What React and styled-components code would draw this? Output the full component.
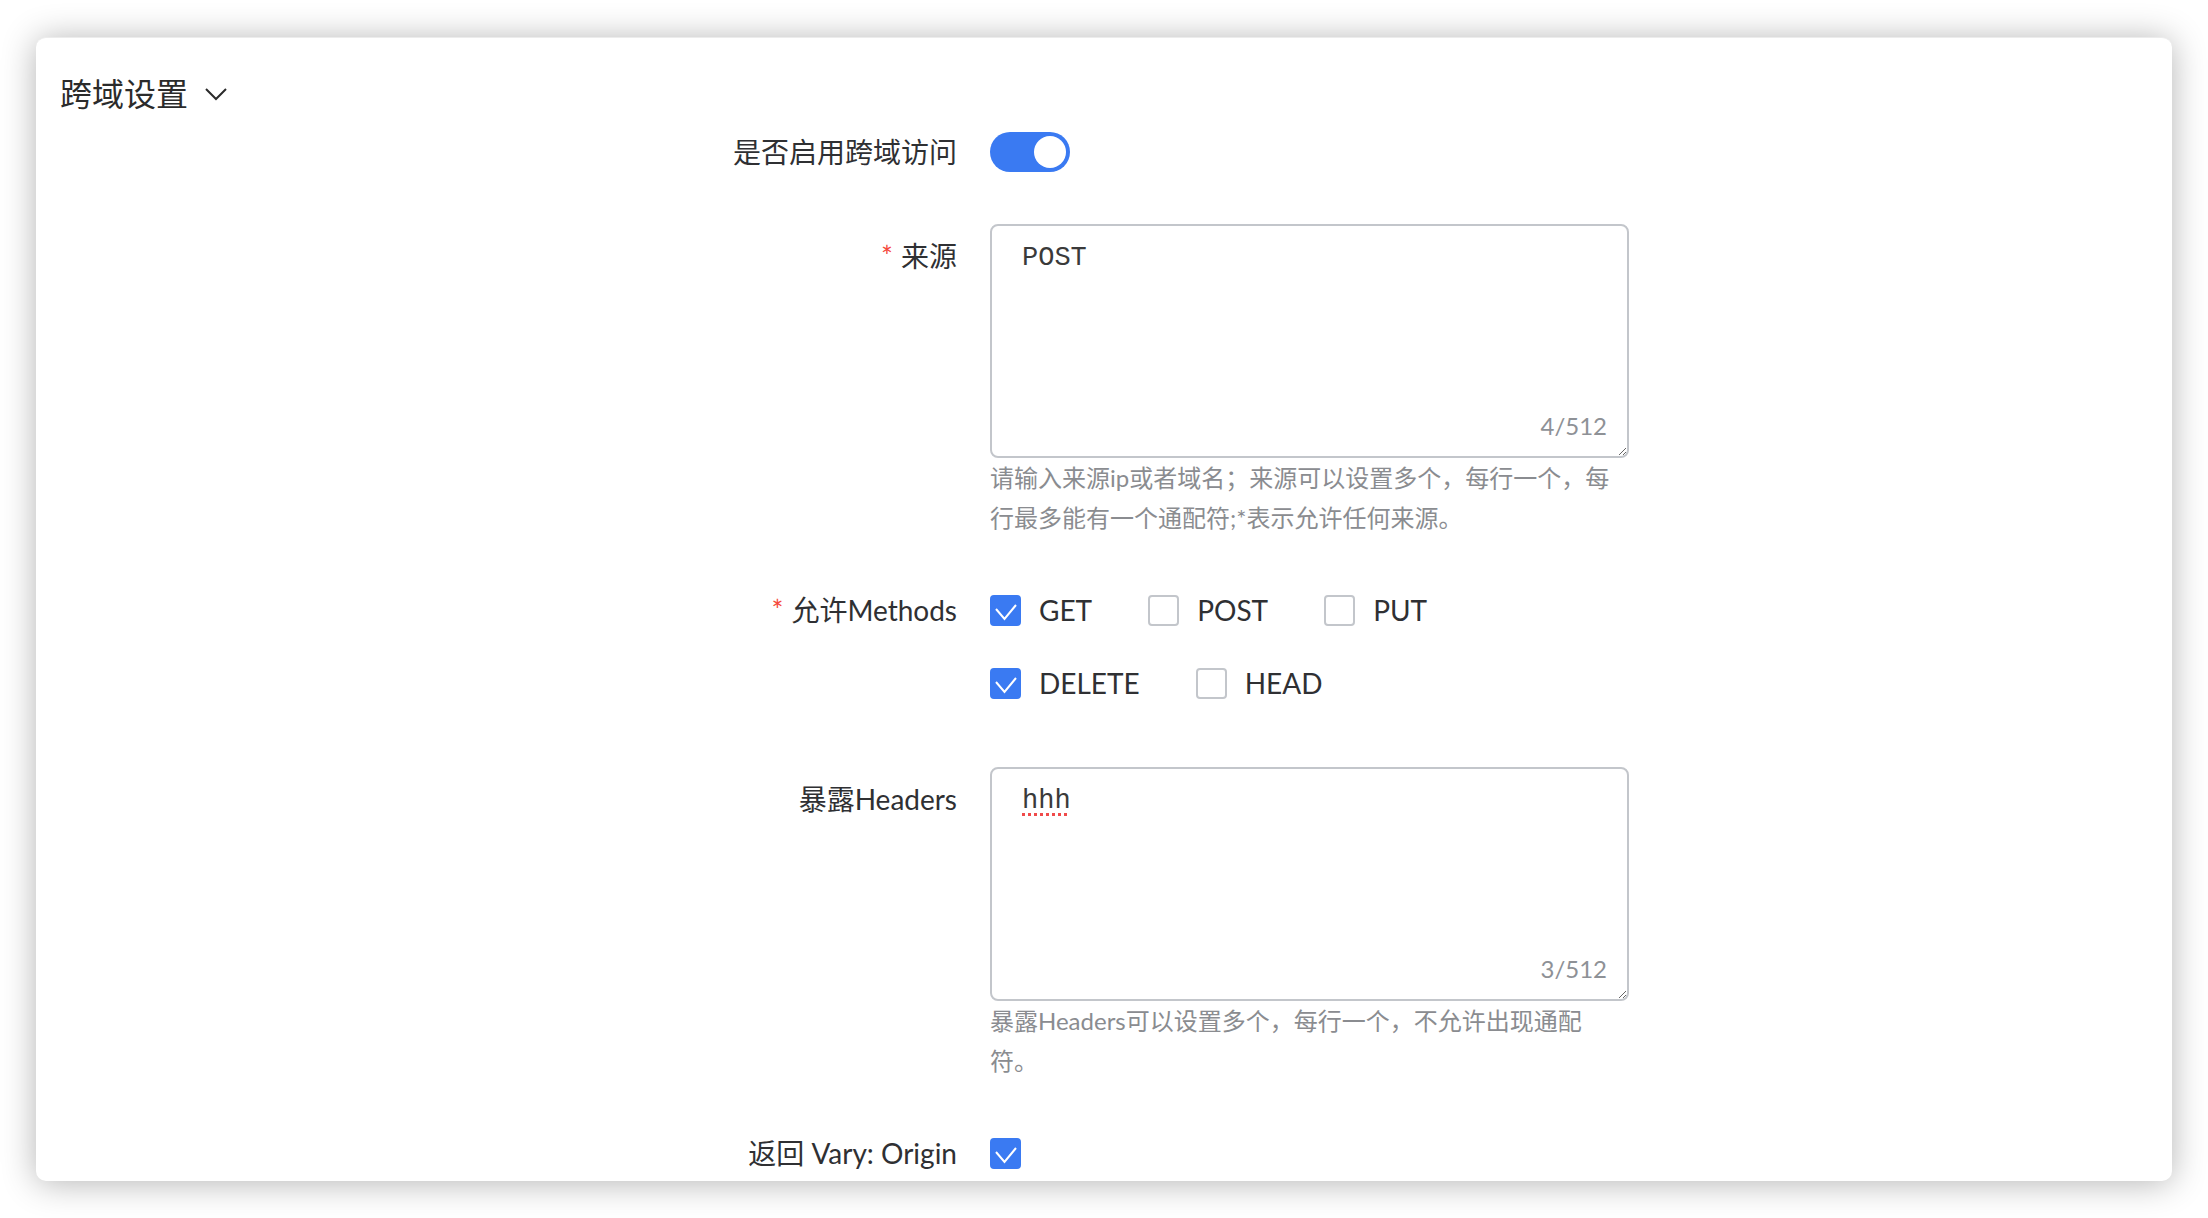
import React from "react";
import styled, { createGlobalStyle } from "styled-components";

const GlobalStyle = createGlobalStyle`
  html, body {
    margin: 0;
    padding: 0;
    background: #fff;
  }
  body {
    font-family: "Lato", "Noto Sans CJK SC", sans-serif;
    color: #2f3033;
  }
  * {
    box-sizing: border-box;
  }
`;

const Page = styled.div`
  width: 2208px;
  height: 1218px;
  padding: 37px 36px 0;
  overflow: hidden;
`;

const Card = styled.div`
  height: 1144px;
  background: #fff;
  border-radius: 10px;
  border-top: 1px solid #ececec;
  box-shadow: 0 2px 34px rgba(0, 0, 0, 0.3);
  padding: 36px 24px 0;
  overflow: hidden;
`;

const Title = styled.div`
  display: flex;
  align-items: center;
  gap: 16px;
  font-size: 32px;
  line-height: 40px;
  color: #2b2b2b;
`;

const Form = styled.div`
  margin-top: 6px;
  padding-left: 597px;
`;

const FormItem = styled.div`
  display: flex;
  align-items: flex-start;
  margin-bottom: ${(p) => p.$gap || 40}px;
`;

const Label = styled.div`
  width: 333px;
  padding-right: 33px;
  text-align: right;
  font-size: 28px;
  line-height: 64px;
  color: #2f3033;
  white-space: nowrap;
`;

const Star = styled.span`
  color: #f5483b;
  margin-right: 8px;
`;

const Control = styled.div`
  width: 639px;
  min-height: 64px;
  display: flex;
  flex-direction: column;
  justify-content: ${(p) => (p.$center ? "center" : "flex-start")};
`;

const Switch = styled.div`
  position: relative;
  width: 80px;
  height: 40px;
  border-radius: 20px;
  background: #3a7af2;

  &::after {
    content: "";
    position: absolute;
    top: 4px;
    right: 4px;
    width: 32px;
    height: 32px;
    border-radius: 50%;
    background: #fff;
  }
`;

const TextBox = styled.div`
  position: relative;
  width: 639px;
  height: 234px;
  border: 2px solid #c3c6cb;
  border-radius: 8px;
  padding: 12px 30px;
  font-family: "Liberation Mono", monospace;
  font-size: 27px;
  line-height: 40px;
  color: #3a3a3a;
  resize: vertical;
  overflow: auto;
`;

const Misspelled = styled.span`
  text-decoration: underline dotted #f04a4a;
  text-decoration-thickness: 3px;
  text-underline-offset: 5px;
`;

const Counter = styled.span`
  position: absolute;
  right: 20px;
  bottom: 18px;
  font-family: "Lato", "Noto Sans CJK SC", sans-serif;
  font-size: 24px;
  line-height: 24px;
  color: #8e9196;
`;

const Hint = styled.div`
  width: 634px;
  font-size: 24px;
  line-height: 40px;
  color: #8a8c90;
`;

const CheckGroup = styled.div`
  display: flex;
  flex-wrap: wrap;
  row-gap: 9px;
`;

const CheckItem = styled.label`
  display: flex;
  align-items: center;
  gap: 18px;
  height: 64px;
  margin-right: 56px;
  font-size: 28px;
  color: #2f3033;
`;

const Box = styled.span`
  width: 31px;
  height: 31px;
  border-radius: 4px;
  border: 2px solid ${(p) => (p.$checked ? "#3a7af2" : "#c3c6cb")};
  background: ${(p) => (p.$checked ? "#3a7af2" : "#fff")};
  display: flex;
  align-items: center;
  justify-content: center;
`;

const Chevron = () => (
  <svg width="24" height="14" viewBox="0 0 24 14">
    <polyline points="2,2 12,12 22,2" fill="none" stroke="#2b2b2b" strokeWidth="2" />
  </svg>
);

const Checkbox = ({ checked }) => (
  <Box $checked={checked}>
    {checked && (
      <svg width="27" height="27" viewBox="0 0 27 27">
        <polyline
          points="4,12 12.5,22 24,8"
          fill="none"
          stroke="#fff"
          strokeWidth="2"
        />
      </svg>
    )}
  </Box>
);

const methods = [
  { name: "GET", checked: true },
  { name: "POST", checked: false },
  { name: "PUT", checked: false },
  { name: "DELETE", checked: true },
  { name: "HEAD", checked: false },
];

export default function App() {
  return (
    <Page>
      <GlobalStyle />
      <Card>
        <Title>
          跨域设置
          <Chevron />
        </Title>
        <Form>
          <FormItem>
            <Label>是否启用跨域访问</Label>
            <Control $center>
              <Switch />
            </Control>
          </FormItem>

          <FormItem>
            <Label>
              <Star>*</Star>来源
            </Label>
            <Control>
              <TextBox>
                POST
                <Counter>4/512</Counter>
              </TextBox>
              <Hint>
                请输入来源ip或者域名；来源可以设置多个，每行一个，每行最多能有一个通配符;*表示允许任何来源。
              </Hint>
            </Control>
          </FormItem>

          <FormItem $gap={52}>
            <Label>
              <Star>*</Star>允许Methods
            </Label>
            <Control>
              <CheckGroup>
                {methods.map((m) => (
                  <CheckItem key={m.name}>
                    <Checkbox checked={m.checked} />
                    {m.name}
                  </CheckItem>
                ))}
              </CheckGroup>
            </Control>
          </FormItem>

          <FormItem>
            <Label>暴露Headers</Label>
            <Control>
              <TextBox>
                <Misspelled>hhh</Misspelled>
                <Counter>3/512</Counter>
              </TextBox>
              <Hint>暴露Headers可以设置多个，每行一个，不允许出现通配符。</Hint>
            </Control>
          </FormItem>

          <FormItem>
            <Label>返回 Vary: Origin</Label>
            <Control $center>
              <Checkbox checked />
            </Control>
          </FormItem>
        </Form>
      </Card>
    </Page>
  );
}
